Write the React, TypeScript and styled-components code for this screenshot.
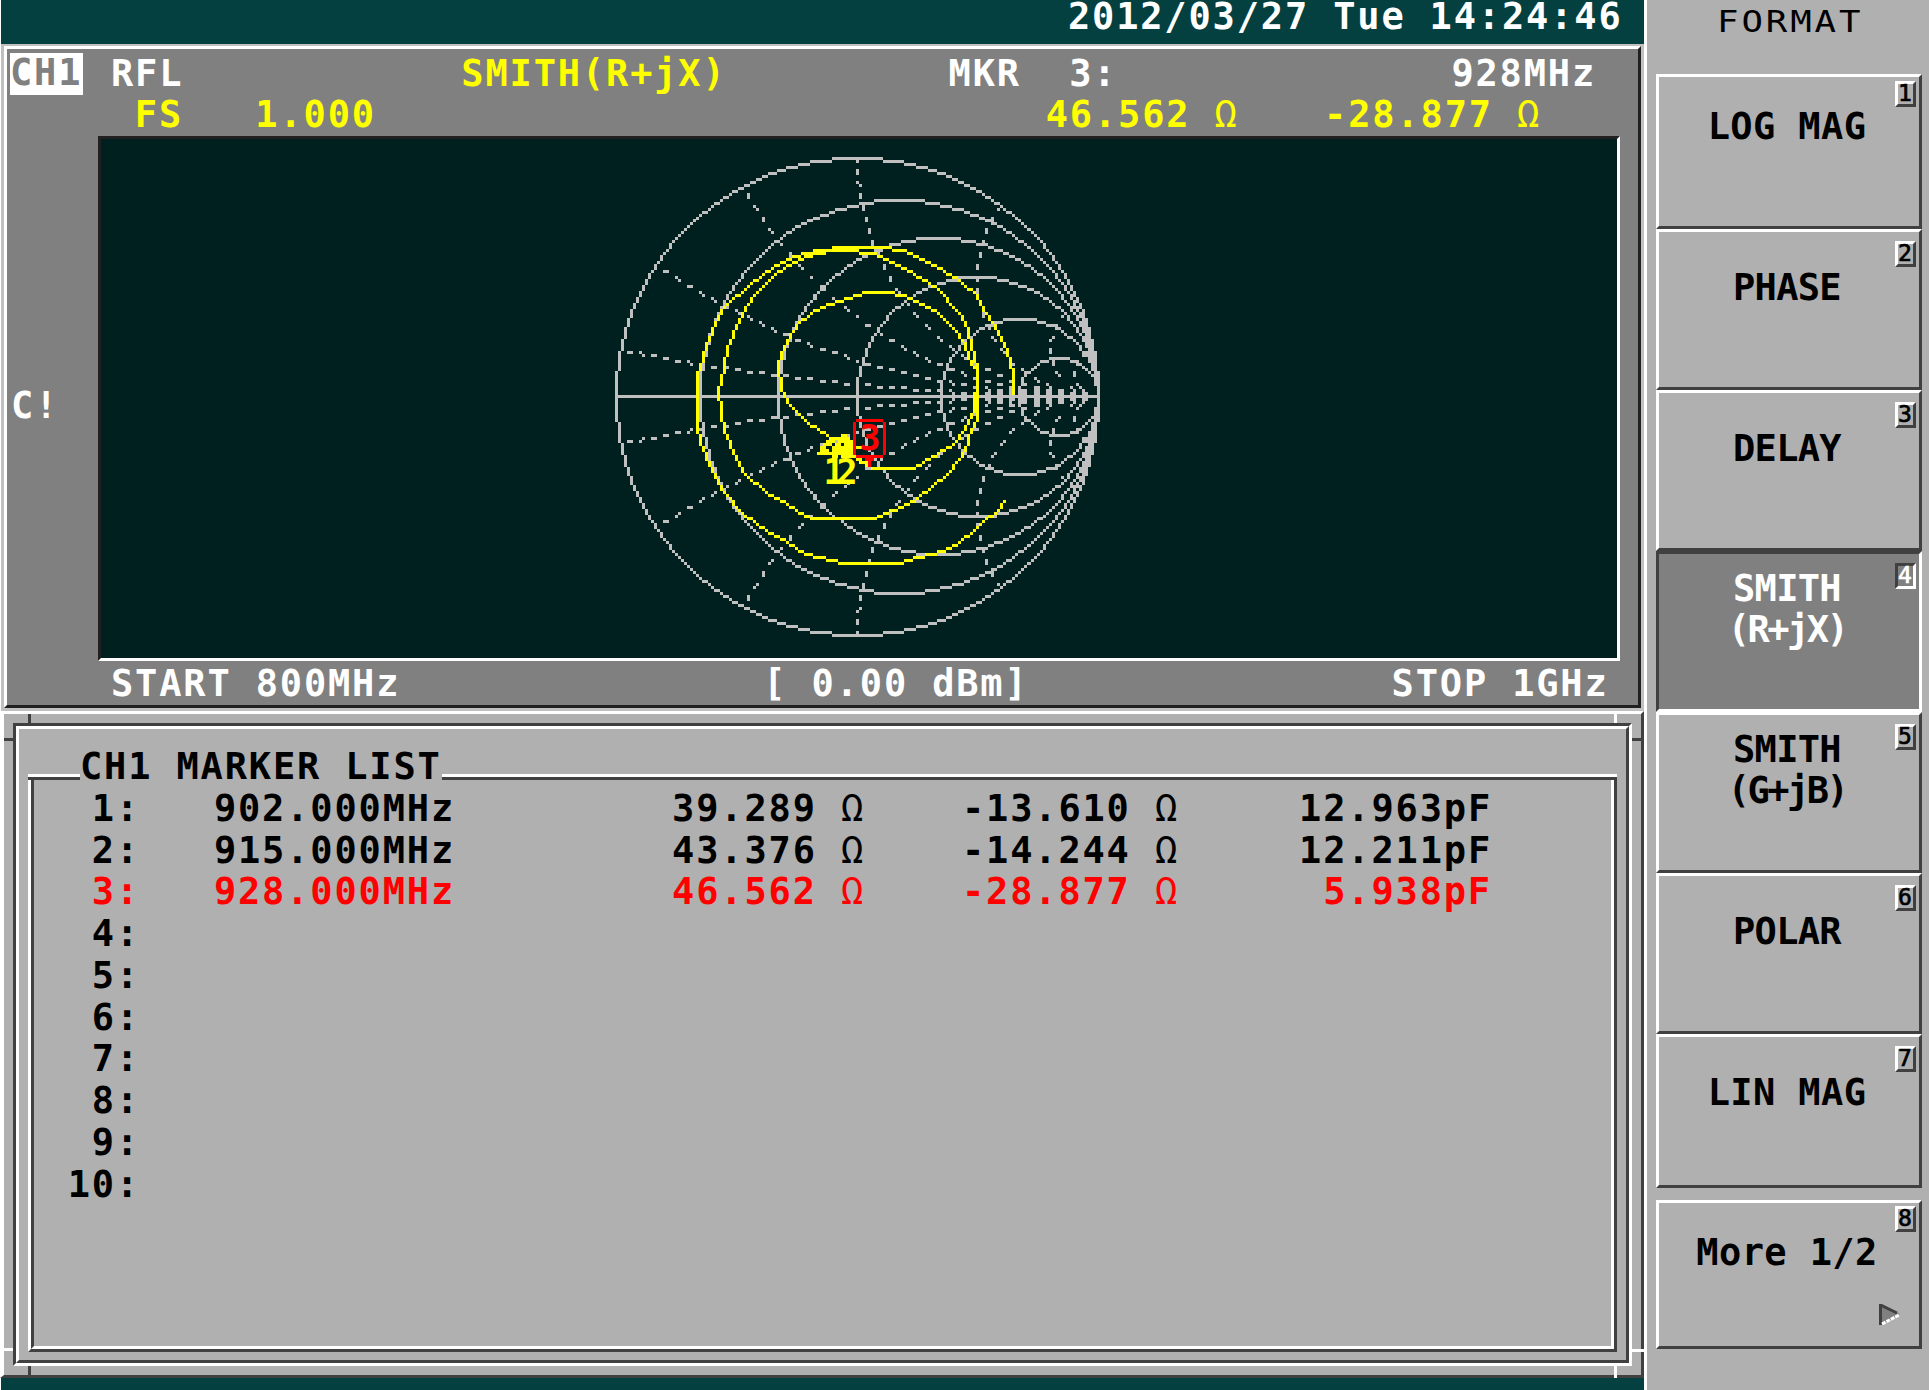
import React from 'react';
import styled, { createGlobalStyle, css } from 'styled-components';

const CELL = 24.11;
const LINE = 41.72;
const TEAL = '#044040';
const FACE = '#b0b0b0';
const DARK = '#404040';

const GlobalStyle = createGlobalStyle`
  html, body { margin: 0; padding: 0; background: #fff; }
  body { width: 1929px; height: 1390px; overflow: hidden; }
  * { box-sizing: border-box; }
`;

const monoText = css`
  font-family: 'DejaVu Sans Mono', 'Liberation Mono', monospace;
  font-weight: 700;
  font-size: 37px;
  line-height: ${LINE}px;
  letter-spacing: ${CELL - 37 * 0.602}px;
  white-space: pre;
`;

const Screen = styled.div`
  ${monoText}
  width: 1929px;
  height: 1390px;
  display: flex;
  background: #fff;
  color: #000;
  overflow: hidden;
`;

const Main = styled.main`
  width: 1644px;
  height: 1390px;
  display: flex;
  flex-direction: column;
`;

const StatusBar = styled.header`
  height: 44px;
  margin-left: 1px;
  padding-right: 21.5px;
  background: ${TEAL};
  color: #fff;
  display: flex;
  justify-content: flex-end;
  align-items: flex-start;
`;

const Clock = styled.time`
  line-height: 34px;
`;

const ChannelPanel = styled.section`
  height: 667px;
  margin-left: 1px;
  border: 3px solid #c0c0c0;
  border-top-width: 2px;
`;

const ChannelFace = styled.div`
  height: 100%;
  background: #808080;
  border-style: solid;
  border-width: 3px;
  border-color: #fff #202020 #202020 #fff;
  padding-top: 3.6px;
  display: flex;
  flex-direction: column;
`;

const TextRow = styled.div<{ $color?: string; $mt?: number }>`
  height: ${LINE}px;
  margin-top: ${(p) => p.$mt || 0}px;
  flex: none;
  display: flex;
  color: ${(p) => p.$color || '#fff'};
`;

const Field = styled.span<{ $ml?: number }>`
  margin-left: ${(p) => p.$ml || 0}px;
  flex: none;
`;

const YellowField = styled(Field)`
  color: #ff0;
`;

const Unit = styled.span`
  font-weight: 400;
`;

const ChannelTag = styled.span`
  height: 42px;
  width: 73px;
  margin-left: 3px;
  background: #fff;
  color: #808080;
  flex: none;
  line-height: 40.6px;
`;

const PlotRow = styled.div`
  height: 525px;
  flex: none;
  display: flex;
`;

const PlotSide = styled.div`
  width: 91px;
  padding: 249px 0 0 4px;
  color: #fff;
  flex: none;
`;

const Plot = styled.div`
  width: 1522px;
  height: 525px;
  background: #002020;
  border-style: solid;
  border-width: 3px;
  border-color: #202020 #fff #fff #202020;
  overflow: hidden;

  svg {
    display: block;
  }
`;

const ListPanel = styled.section`
  position: relative;
  height: 667px;
  border-style: solid;
  border-width: 3px 3px 3px 4px;
  border-color: #fff ${DARK} ${DARK} #fff;
  background: ${FACE};
  padding: 9px 9px 9px 9px;
`;

const ListFrame = styled.div`
  height: 643px;
  border: 3px solid;
  border-color: ${DARK} #fff #fff ${DARK};
`;

const ListFrameInner = styled.div`
  height: 637px;
  border: 3px solid;
  border-color: #fff ${DARK} ${DARK} #fff;
  padding: 17px 9px 0 9px;
`;

const Legend = styled.div`
  display: flex;
  height: ${LINE}px;
`;

const Rule = styled.i<{ $w?: number }>`
  width: ${(p) => (p.$w ? `${p.$w}px` : 'auto')};
  flex: ${(p) => (p.$w ? 'none' : '1')};
  height: 6px;
  margin-top: 28px;
  border-top: 3px solid #fff;
  border-bottom: 3px solid ${DARK};
`;

const ListBody = styled.div`
  height: 575px;
  margin-top: -10.7px;
  border: 3px solid;
  border-top: 0;
  border-color: #fff ${DARK} ${DARK} #fff;
`;

const ListBodyInner = styled.div`
  height: 572px;
  border: 3px solid;
  border-top: 0;
  border-color: ${DARK} #fff #fff ${DARK};
  padding-top: 11px;
`;

const MarkerRow = styled.div<{ $active?: boolean }>`
  height: ${LINE}px;
  display: grid;
  grid-template-columns: 106px 315px 410px 314px 313px;
  color: ${(p) => (p.$active ? '#f00' : '#000')};
`;

const Cell = styled.span`
  text-align: right;
`;

const Tick = styled.i<{ $x: number; $y: number; $w: number; $h: number; $light?: boolean }>`
  position: absolute;
  left: ${(p) => p.$x}px;
  top: ${(p) => p.$y}px;
  width: ${(p) => p.$w}px;
  height: ${(p) => p.$h}px;
  background: ${(p) => (p.$light ? '#fff' : DARK)};
`;

const Footer = styled.footer`
  flex: 1;
  margin-left: 1px;
  background: ${TEAL};
`;

const Side = styled.aside`
  width: 282px;
  margin-left: 3px;
  background: ${FACE};
  display: flex;
  flex-direction: column;
  padding: 0 7px 0 9px;
`;

const SideTitle = styled.h1`
  margin: 0;
  height: 73.6px;
  flex: none;
  padding: 2px 0 0 2px;
  text-align: center;
  font-size: 29.5px;
  font-weight: 400;
  letter-spacing: 2.4px;
  transform: scaleX(1.21);
`;

const SoftKey = styled.button<{ $h: number; $pad: number; $pressed?: boolean; $gap?: boolean }>`
  ${monoText}
  position: relative;
  width: 266px;
  height: ${(p) => p.$h}px;
  flex: none;
  margin: ${(p) => (p.$gap ? 12.5 : 0)}px 0 0;
  padding: ${(p) => p.$pad}px 4px 0 0;
  border: 3px solid;
  border-color: ${(p) => (p.$pressed ? `${DARK} #fff #fff ${DARK}` : `#fff ${DARK} ${DARK} #fff`)};
  background: ${(p) => (p.$pressed ? '#808080' : FACE)};
  color: ${(p) => (p.$pressed ? '#fff' : '#000')};
  display: flex;
  flex-direction: column;
  align-items: center;
  justify-content: flex-start;
`;

const KeyLabel = styled.span<{ $spacing: number }>`
  letter-spacing: ${(p) => p.$spacing}px;
`;

const KeyNumber = styled.span<{ $top: number; $pressed?: boolean }>`
  position: absolute;
  right: 3px;
  top: ${(p) => p.$top}px;
  width: 21px;
  height: 26px;
  border: 3px solid;
  border-color: ${(p) => (p.$pressed ? `${DARK} #fff #fff ${DARK}` : `#fff ${DARK} ${DARK} #fff`)};
  font-size: 23px;
  font-weight: 400;
  line-height: 18px;
  letter-spacing: 0;
  text-align: center;
  text-indent: -1px;
  -webkit-text-stroke: 0.7px currentColor;
`;

const MoreArrow = styled.svg`
  position: absolute;
  right: 19px;
  bottom: 21px;
`;

/* ---------- chart raster ---------- */

const PX = 3.014;
const PY = 2.98;
const CX = 756.2;
const CY = 257.8;
const R = 80;

type Pixels = Set<string>;

const edgeX = (i: number) => Math.round(CX + (i - 0.5) * PX);
const edgeY = (j: number) => Math.round(CY + (j - 0.5) * PY);

const pathOf = (pixels: Pixels) =>
  Array.from(pixels)
    .map((k) => {
      const [i, j] = k.split(',').map(Number);
      const w = edgeX(i + 1) - edgeX(i);
      return `M${edgeX(i)} ${edgeY(j)}h${w}v3h${-w}z`;
    })
    .join('');

function resistanceCircles(): Pixels {
  const set: Pixels = new Set();
  [80, 66, 53, 40, 26, 13].forEach((r) => {
    const c = R - r;
    const lim = Math.round(r * Math.SQRT1_2);
    for (let a = -lim; a <= lim; a++) {
      const b = Math.round(Math.sqrt(r * r - a * a));
      set.add(`${c + a},${b}`);
      set.add(`${c + a},${-b}`);
      set.add(`${c + b},${a}`);
      set.add(`${c - b},${a}`);
    }
  });
  for (let i = -R; i <= R; i++) set.add(`${i},0`);
  return set;
}

function reactanceArcs(): Pixels {
  const set: Pixels = new Set();
  const dash = (n: number) => {
    const m = Math.abs(n) % 4;
    return m === 3 || m === 0;
  };
  const inside = (u: number, v: number) => u * u + v * v < R * R;
  [0.1, 0.3, 0.6, 1, 2, 5, 10].forEach((x) => {
    const rad = R / x;
    for (let u = -R; u <= R; u++) {
      const d = Math.abs(u - R);
      if (d > rad * Math.SQRT1_2 || !dash(u)) continue;
      const h = Math.sqrt(rad * rad - d * d);
      [rad - h, rad + h].forEach((v) => {
        if (!inside(u, v)) return;
        set.add(`${u},${Math.round(v)}`);
        set.add(`${u},${-Math.round(v)}`);
      });
    }
    for (let v = 0; v <= R; v++) {
      const d = Math.abs(v - rad);
      if (d > rad * Math.SQRT1_2 || !dash(v)) continue;
      const u = R - Math.sqrt(rad * rad - d * d);
      if (!inside(u, v)) continue;
      set.add(`${Math.round(u)},${v}`);
      set.add(`${Math.round(u)},${-v}`);
    }
  });
  return set;
}

function line(set: Pixels, x0: number, y0: number, x1: number, y1: number) {
  const n = Math.max(Math.abs(x1 - x0), Math.abs(y1 - y0));
  for (let t = 0; t <= n; t++) {
    const k = n ? t / n : 0;
    set.add(`${Math.round(x0 + (x1 - x0) * k)},${Math.round(y0 + (y1 - y0) * k)}`);
  }
}

/* Trace samples as x, y pairs on a fine grid centred on (772, 770). */
const TRACE: number[][] = [
  [1245, 765, 1243, 700, 1225, 640, 1210, 598, 1180, 550, 1145, 490, 1135, 470, 1075, 425, 1010, 380, 950, 348,
    905, 335, 850, 323, 770, 322, 715, 322, 660, 335, 580, 352, 525, 378, 455, 430, 370, 505, 345, 550, 318, 620,
    300, 680, 292, 700, 292, 865, 300, 900, 320, 945, 345, 1010, 375, 1060, 430, 1120, 500, 1175, 560, 1212,
    620, 1240, 700, 1262, 740, 1271, 900, 1271, 955, 1250, 1030, 1232, 1080, 1205, 1130, 1165, 1165, 1140,
    1195, 1110, 1215, 1082],
  [1135, 830, 1135, 680, 1120, 620, 1100, 550, 1070, 510, 1015, 450, 990, 430, 940, 400, 880, 370, 830, 345,
    790, 338, 760, 330, 700, 330, 620, 350, 560, 380, 520, 408, 465, 470, 430, 520, 400, 580, 382, 620, 372, 680,
    355, 750, 365, 820, 375, 870, 400, 940, 435, 1000, 500, 1055, 560, 1092, 620, 1128, 655, 1136, 820, 1136,
    880, 1110, 950, 1078, 1000, 1040, 1050, 990, 1100, 930, 1120, 870, 1135, 830],
  [1128, 765, 1125, 800, 1115, 830, 1085, 880, 1060, 910, 1020, 940, 975, 965, 935, 984, 830, 984, 790, 965,
    740, 930, 685, 890, 630, 850, 590, 815, 565, 785, 548, 750, 537, 680, 545, 640, 560, 600, 600, 550, 660, 505,
    720, 485, 800, 460, 850, 457, 920, 470, 970, 490, 1020, 520, 1060, 560, 1095, 605, 1110, 650, 1128, 680],
];

const unit = (x: number, y: number): [number, number] => [
  Math.round((x - 772) / 9.04),
  Math.round((y - 770) / 8.94),
];

function polyline(set: Pixels, pts: number[]) {
  for (let k = 0; k + 3 < pts.length; k += 2) {
    const a = unit(pts[k], pts[k + 1]);
    const b = unit(pts[k + 2], pts[k + 3]);
    line(set, a[0], a[1], b[0], b[1]);
  }
}

function traces(): Pixels {
  const set: Pixels = new Set();
  TRACE.forEach((t) => polyline(set, t));
  return set;
}

/* Two overlapping marker heads, rows listed as [y, x-start, x-end]. */
const HEAD_ROWS: number[][] = [
  [13, -5, -4],
  [14, -9, -3],
  [15, -10, -8], [15, -6, -2],
  [16, -11, -9], [16, -7, -6], [16, -4, -2],
  [17, -12, -11], [17, -8, 1],
  [18, -12, -10], [18, -8, -1],
  [19, -13, -2],
  [20, -5, -2], [20, -8, -7],
  [22, 1, 4],
];

function markerHeads(): Pixels {
  const set: Pixels = new Set();
  HEAD_ROWS.forEach(([y, a, b]) => line(set, a, y, b, y));
  return set;
}

function activeMarker(): Pixels {
  const set: Pixels = new Set();
  line(set, 0, 8, 8, 8);
  line(set, 0, 20, 8, 20);
  line(set, -1, 9, -1, 19);
  line(set, 9, 9, 9, 19);
  line(set, 4, 20, 4, 23);
  line(set, 3, 21, 5, 21);
  return set;
}

const GRID_PATH = pathOf(new Set([...resistanceCircles(), ...reactanceArcs()]));
const TRACE_PATH = pathOf(traces());
const HEADS_PATH = pathOf(markerHeads());
const ACTIVE_PATH = pathOf(activeMarker());

const MarkerDigit = styled.text<{ $tight?: boolean }>`
  font-family: 'DejaVu Sans Mono', monospace;
  font-weight: 700;
  letter-spacing: ${(p) => (p.$tight ? -8 : 0)}px;
`;

const SmithChart = () => (
  <svg width="1516" height="519" viewBox="0 0 1516 519">
    <g shapeRendering="crispEdges">
      <path d={GRID_PATH} fill="#c0c0c0" />
      <path d={TRACE_PATH} fill="#ff0" />
      <path d={HEADS_PATH} fill="#ff0" />
    </g>
    <MarkerDigit x="722.5" y="344.5" fontSize="35" fill="#ff0" $tight>12</MarkerDigit>
    <path d={ACTIVE_PATH} fill="#f00" shapeRendering="crispEdges" />
    <MarkerDigit x="758.5" y="310.5" fontSize="35" fill="#f00">3</MarkerDigit>
  </svg>
);

/* ---------- data ---------- */

const markers = [
  { freq: '902.000MHz', r: '39.289', x: '-13.610', c: '12.963pF' },
  { freq: '915.000MHz', r: '43.376', x: '-14.244', c: '12.211pF' },
  { freq: '928.000MHz', r: '46.562', x: '-28.877', c: '5.938pF', active: true },
  ...Array.from({ length: 7 }, () => ({ freq: '', r: '', x: '', c: '', active: false })),
];

const keys = [
  { lines: ['LOG MAG'], h: 155, pad: 29.5, top: 4 },
  { lines: ['PHASE'], h: 161, pad: 35, top: 9 },
  { lines: ['DELAY'], h: 161, pad: 35, top: 9 },
  { lines: ['SMITH', '(R+jX)'], h: 161, pad: 14, top: 9, pressed: true },
  { lines: ['SMITH', '(G+jB)'], h: 161, pad: 14, top: 9 },
  { lines: ['POLAR'], h: 161, pad: 35, top: 9 },
  { lines: ['LIN MAG'], h: 154, pad: 35, top: 9 },
  { lines: ['More 1/2'], h: 149, pad: 29, top: 3, gap: true, more: true },
];

/* Key captions are set tighter the shorter they are; bracketed ones tightest. */
const captionSpacing = (s: string) => (s.startsWith('(') ? -2.5 : s.length === 5 ? -0.7 : 0.4);

const Ohms = ({ value }: { value: string }) => (
  <>
    {value} <Unit>Ω</Unit>
  </>
);

export default function App() {
  return (
    <>
      <GlobalStyle />
      <Screen>
        <Main>
          <StatusBar>
            <Clock>2012/03/27 Tue 14:24:46</Clock>
          </StatusBar>

          <ChannelPanel>
            <ChannelFace>
              <TextRow>
                <ChannelTag>CH1</ChannelTag>
                <Field $ml={28}>RFL</Field>
                <YellowField $ml={278}>SMITH(R+jX)</YellowField>
                <Field $ml={222}>MKR  3:</Field>
                <Field $ml={334}>928MHz</Field>
              </TextRow>
              <TextRow $color="#ff0">
                <Field $ml={127.8}>FS</Field>
                <Field $ml={72.3}>1.000</Field>
                <Field $ml={669.8}><Ohms value="46.562" /></Field>
                <Field $ml={85.5}><Ohms value="-28.877" /></Field>
              </TextRow>
              <PlotRow>
                <PlotSide>C!</PlotSide>
                <Plot>
                  <SmithChart />
                </Plot>
              </PlotRow>
              <TextRow $mt={1.6}>
                <Field $ml={104}>START 800MHz</Field>
                <Field $ml={363}>[ 0.00 dBm]</Field>
                <Field $ml={363}>STOP 1GHz</Field>
              </TextRow>
            </ChannelFace>
          </ChannelPanel>

          <ListPanel>
            <ListFrame>
              <ListFrameInner>
                <Legend>
                  <Rule $w={52} />
                  <span>CH1 MARKER LIST</span>
                  <Rule />
                </Legend>
                <ListBody>
                  <ListBodyInner>
                    {markers.map((m, i) => (
                      <MarkerRow key={i} $active={m.active}>
                        <Cell>{`${i + 1}:`}</Cell>
                        <Cell>{m.freq}</Cell>
                        <Cell>{m.r && <Ohms value={m.r} />}</Cell>
                        <Cell>{m.x && <Ohms value={m.x} />}</Cell>
                        <Cell>{m.c}</Cell>
                      </MarkerRow>
                    ))}
                  </ListBodyInner>
                </ListBody>
              </ListFrameInner>
            </ListFrame>
            <Tick $x={24} $y={0} $w={3} $h={9} />
            <Tick $x={0} $y={24} $w={9} $h={3} />
            <Tick $x={1610} $y={0} $w={3} $h={9} $light />
            <Tick $x={1628} $y={24} $w={9} $h={3} />
            <Tick $x={0} $y={634} $w={9} $h={3} $light />
            <Tick $x={24} $y={652} $w={3} $h={9} />
            <Tick $x={1628} $y={635} $w={12} $h={3} $light />
            <Tick $x={1610} $y={652} $w={3} $h={12} $light />
          </ListPanel>
          <Footer />
        </Main>

        <Side>
          <SideTitle>FORMAT</SideTitle>
          {keys.map((k, i) => (
            <SoftKey key={i} $h={k.h} $pad={k.pad} $pressed={k.pressed} $gap={k.gap}>
              {k.lines.map((l) => (
                <KeyLabel key={l} $spacing={captionSpacing(l)}>{l}</KeyLabel>
              ))}
              <KeyNumber $top={k.top} $pressed={k.pressed}>
                {i + 1}
              </KeyNumber>
              {k.more && (
                <MoreArrow width="21" height="21" viewBox="0 0 21 21">
                  <path d="M0 0L21 10L3 21H0Z" fill="#808080" />
                  <path d="M1.5 21V1L18 9" fill="none" stroke={DARK} strokeWidth="3" />
                  <path d="M3 20L20 11" stroke="#fff" strokeWidth="3" strokeDasharray="4 1" />
                </MoreArrow>
              )}
            </SoftKey>
          ))}
        </Side>
      </Screen>
    </>
  );
}
